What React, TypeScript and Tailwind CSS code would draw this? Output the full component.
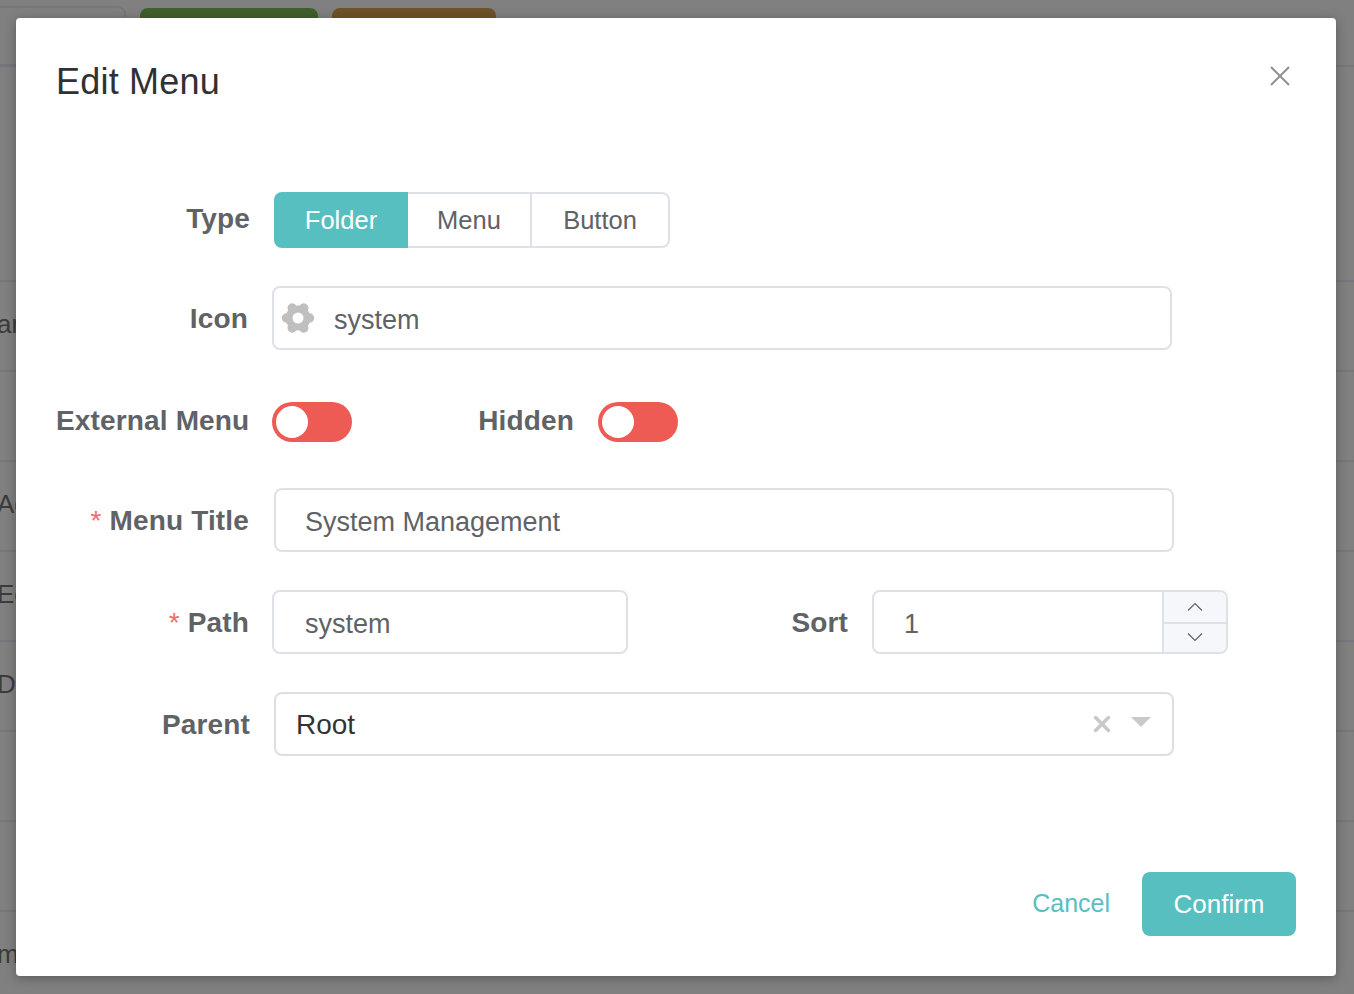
import React from "react";

const font = "font-['Liberation_Sans',Arial,sans-serif]";

function Gear() {
  const angles = [0, 60, 120, 180, 240, 300];
  return (
    <svg width="34" height="34" viewBox="-17 -17 34 34" className="shrink-0">
      <circle r="9" fill="none" stroke="#bfbfbf" strokeWidth="7" />
      {angles.map((a) => (
        <line key={a} x1="10.5" y1="0" x2="11.5" y2="0" stroke="#bfbfbf" strokeWidth="9.5" strokeLinecap="round" transform={`rotate(${a})`} />
      ))}
    </svg>
  );
}

function Label({ w, required, up, children }: { w: string; required?: boolean; up?: boolean; children: React.ReactNode }) {
  return (
    <div className={`${w} ${up ? "pb-0.5" : "pt-0.5"} shrink-0 text-right text-[28px] font-bold tracking-[0.15px] text-[#606266] whitespace-nowrap`}>
      {required && <span className="mr-2 font-normal text-[#f56c6c]">*</span>}
      {children}
    </div>
  );
}

function Field({ className, value }: { className: string; value: string }) {
  return (
    <div className={`${className} flex h-16 items-center rounded-lg border-2 border-[#dfe1e8] bg-white pt-1 text-[27px] text-[#606266]`}>
      {value}
    </div>
  );
}

function Switch() {
  return (
    <div className="flex h-10 w-20 shrink-0 items-center rounded-full bg-[#ee5a54] pl-1">
      <div className="h-8 w-8 rounded-full bg-white" />
    </div>
  );
}

export default function App() {
  const rows = ["ar", "", "Ad", "Ed", "De", "", "", "me"];
  return (
    <div className={`${font} relative h-[994px] w-full overflow-hidden bg-[#808080]`}>
      <div className="flex h-[67px] items-start gap-[14px] border-b-2 border-[#76767c] pt-2">
        <div className="-ml-2 h-[60px] w-[134px] -translate-y-0.5 rounded-lg border-2 border-[#76767c]" />
        <div className="h-12 w-[178px] rounded-lg bg-[#41602b]" />
        <div className="h-12 w-[164px] rounded-lg bg-[#6f5329]" />
      </div>
      <div className="h-[213px]" />
      {rows.map((t, i) => (
        <div key={i} className="flex h-[90px] items-center border-t-2 border-[#76767c] text-[26px] text-[#3c3c3c] whitespace-nowrap">
          {t && <span className="-ml-[3px] -mt-1">{t}</span>}
        </div>
      ))}

      <div className="absolute left-4 top-[18px] flex h-[958px] w-[1320px] flex-col rounded bg-white shadow-[0_2px_12px_rgba(0,0,0,0.3)]">
        <div className="flex items-start justify-between pl-10 pr-[44px] pt-[42px]">
          <div className="text-[36px] leading-[44px] tracking-[0.2px] text-[#303133]">Edit Menu</div>
          <svg width="24" height="24" viewBox="0 0 24 24" className="mt-1" fill="none" stroke="#8d9095" strokeWidth="2">
            <path d="M3 3 L21 21 M21 3 L3 21" />
          </svg>
        </div>

        <div className="flex flex-col pl-10 pt-[88px]">
          <div className="flex h-14 items-center gap-6">
            <Label w="w-[194px]" up>Type</Label>
            <div className="flex h-14 text-[25.5px] text-[#606266]">
              <div className="flex w-[134px] items-center justify-center rounded-l-lg bg-[#58bfc1] text-white">Folder</div>
              <div className="flex w-[124px] items-center justify-center border-y-2 border-r-2 border-[#dfe1e8]">Menu</div>
              <div className="flex w-[138px] items-center justify-center rounded-r-lg border-y-2 border-r-2 border-[#dfe1e8]">Button</div>
            </div>
          </div>

          <div className="mt-[38px] flex items-center gap-6">
            <Label w="w-[192px]">Icon</Label>
            <div className="flex h-16 w-[900px] items-center gap-[19px] rounded-lg border-2 border-[#dfe1e8] pl-[7px] text-[27px] text-[#606266]">
              <Gear />
              <span className="pt-1">system</span>
            </div>
          </div>

          <div className="mt-[52px] flex h-10 items-center">
            <Label w="w-[193px]" up>External Menu</Label>
            <div className="ml-[23px]"><Switch /></div>
            <Label w="w-[222px]" up>Hidden</Label>
            <div className="ml-6"><Switch /></div>
          </div>

          <div className="mt-[46px] flex items-center">
            <Label w="w-[193px]" required>Menu Title</Label>
            <Field className="ml-[25px] w-[900px] pl-[29px]" value="System Management" />
          </div>

          <div className="mt-[38px] flex items-center">
            <Label w="w-[193px]" required>Path</Label>
            <Field className="ml-[23px] w-[356px] pl-[31px]" value="system" />
            <Label w="w-[220px]">Sort</Label>
            <div className="ml-6 flex h-16 w-[356px] rounded-lg border-2 border-[#dfe1e8] text-[27px] text-[#606266]">
              <div className="flex flex-1 items-center pl-[30px] pt-1">1</div>
              <div className="flex w-[64px] flex-col overflow-hidden rounded-r-md border-l-2 border-[#dfe1e8] bg-[#f5f7fa]">
                <div className="flex h-8 items-center justify-center border-b-2 border-[#dfe1e8]">
                  <svg width="16" height="10" viewBox="0 0 16 10" fill="none" stroke="#606266" strokeWidth="1.2"><path d="M1 8.5 L8 1.5 L15 8.5" /></svg>
                </div>
                <div className="flex flex-1 items-center justify-center pb-0.5">
                  <svg width="16" height="10" viewBox="0 0 16 10" fill="none" stroke="#606266" strokeWidth="1.2"><path d="M1 1.5 L8 8.5 L15 1.5" /></svg>
                </div>
              </div>
            </div>
          </div>

          <div className="mt-[38px] flex items-center">
            <Label w="w-[194px]">Parent</Label>
            <div className="ml-6 flex h-16 w-[900px] items-center rounded-lg border-2 border-[#dedede] pl-5 pr-[21px] text-[28px] text-[#333333]">
              <span className="flex-1 pt-0.5">Root</span>
              <svg width="18" height="18" viewBox="0 0 18 18" fill="none" stroke="#c9c9c9" strokeWidth="3.5" strokeLinecap="round" className="mr-5"><path d="M2.5 2.5 L15.5 15.5 M15.5 2.5 L2.5 15.5" /></svg>
              <svg width="20" height="12" viewBox="0 0 20 12" fill="#c9c9c9" className="mb-1"><path d="M0 1 H20 L10 11 Z" /></svg>
            </div>
          </div>
        </div>

        <div className="mt-auto flex items-center justify-end gap-8 pb-10 pr-10 text-[26px]">
          <div className="text-[25px] text-[#58bfc1]">Cancel</div>
          <div className="flex h-16 w-[154px] items-center justify-center rounded-lg bg-[#58bfc1] text-white">Confirm</div>
        </div>
      </div>
    </div>
  );
}
